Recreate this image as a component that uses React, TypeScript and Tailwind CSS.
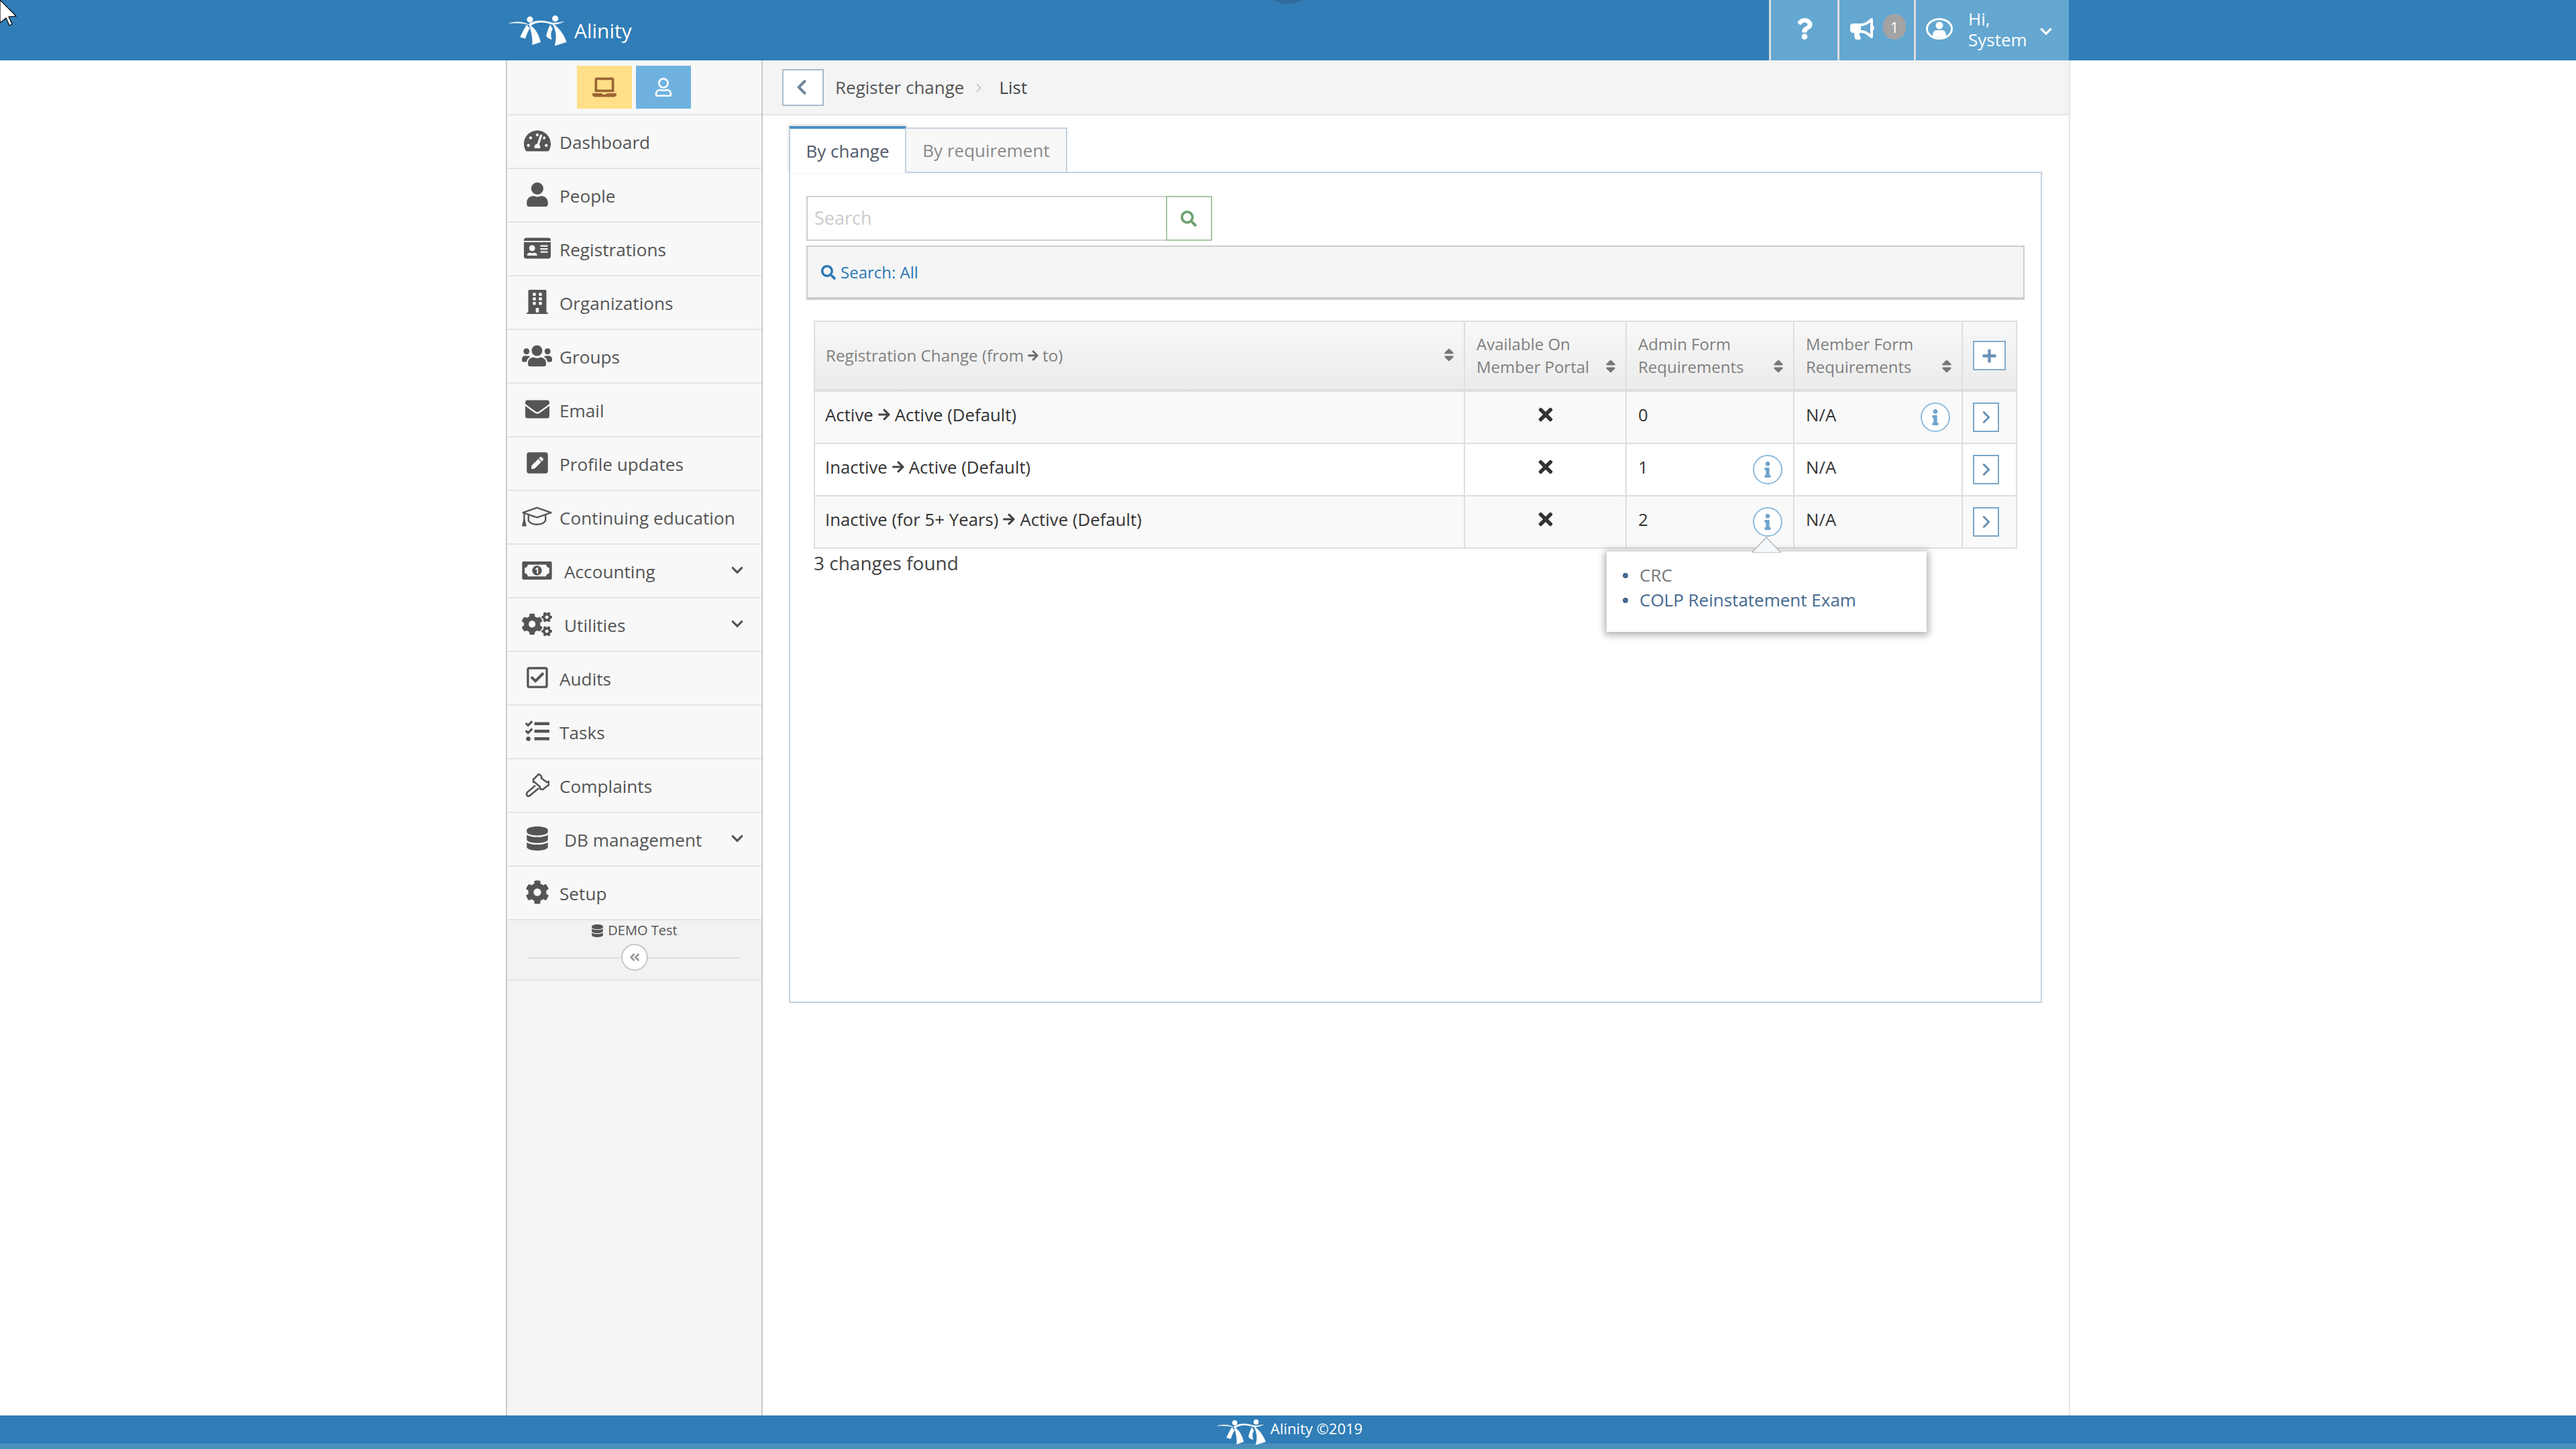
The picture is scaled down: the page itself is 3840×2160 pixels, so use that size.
import React from "react";
import {
  FaTachometerAlt, FaUser, FaIdCard, FaBuilding, FaUsers, FaEnvelope, FaPenSquare, FaCogs,
  FaRegCheckSquare, FaTasks, FaDatabase, FaCog, FaChevronDown, FaChevronLeft, FaBullhorn, FaQuestion,
  FaSearch, FaTimes, FaPlus, FaInfo, FaAngleDoubleLeft, FaLaptop, FaRegUser, FaSort, FaArrowRight,
} from "react-icons/fa";
import { ChevronRight } from "lucide-react";

const font = { fontFamily: '"Open Sans", "Noto Sans", sans-serif' };

function Logo({ className }: { className: string }) {
  return (
    <svg viewBox="0 0 330 180" className={className} fill="#fff" stroke="#fff" strokeWidth="1.5" strokeLinejoin="round">
      <circle cx="105" cy="45" r="13" />
      <circle cx="218" cy="41" r="13" />
      <path d="M12 62 C45 52 78 56 98 68 C112 54 150 42 205 60 C220 62 238 58 256 55 C238 64 220 68 206 68 C165 52 130 56 110 72 C85 62 50 58 12 62Z" />
      <path d="M90 70 L104 84 C94 100 88 116 84 130 L62 124 C70 106 80 86 90 70Z" />
      <path d="M102 68 C130 84 146 118 152 146 L116 158 C118 130 112 100 102 68Z" />
      <path d="M195 70 L206 86 C198 100 196 116 202 134 C188 130 180 124 178 118 C182 102 188 86 195 70Z" />
      <path d="M206 64 C236 82 258 116 268 146 L216 162 C226 130 224 96 206 64Z" />
    </svg>
  );
}

function GradCap({ className }: { className?: string }) {
  return (
    <svg viewBox="0 0 46 30" className={className} fill="none" stroke="currentColor" strokeWidth="2.4">
      <path d="M1.5 9 L23 1.5 L44.5 9 L23 16.5 Z" strokeLinejoin="round" />
      <path d="M10 13 V21 C14 29 32 29 36 21 V13" />
      <path d="M3.5 10 V21" />
      <path d="M1.5 28.5 L3.5 20 L5.5 28.5 Z" fill="currentColor" />
    </svg>
  );
}

function Money({ className }: { className?: string }) {
  return (
    <svg viewBox="0 0 46 28" className={className}>
      <path fillRule="evenodd" fill="currentColor" d="M2 0 H44 Q46 0 46 2 V26 Q46 28 44 28 H2 Q0 28 0 26 V2 Q0 0 2 0Z M9 5 Q8 9 4 10 V18 Q8 19 9 23 H37 Q38 19 42 18 V10 Q38 9 37 5Z" />
      <circle cx="23" cy="14" r="7.5" fill="currentColor" />
      <text x="23" y="18.5" textAnchor="middle" fontSize="12" fontWeight="700" fill="#f8f8f8" fontFamily="Open Sans">1</text>
    </svg>
  );
}

function Gavel({ className }: { className?: string }) {
  return (
    <svg viewBox="0 0 36 36" className={className} fill="none" stroke="currentColor" strokeWidth="2.6" strokeLinejoin="round">
      <path d="M20 2 L24 5 L24 8 L32 14 L35 13 L35 18 L26 25 L22 24 L22 21 L14 14 L12 14 L12 10 Z" />
      <path d="M15 19 L3 29 Q1 32 3 34 Q5 36 8 33 L20 23" />
    </svg>
  );
}

function UserOval({ className }: { className?: string }) {
  return (
    <svg viewBox="0 0 40 32" className={className} fill="none">
      <ellipse cx="20" cy="16" rx="18.5" ry="14.5" stroke="currentColor" strokeWidth="3" />
      <circle cx="20" cy="11" r="5.5" fill="currentColor" />
      <path d="M10 27 Q10 18 16 18 H24 Q30 18 30 27 Q20 31 10 27Z" fill="currentColor" />
    </svg>
  );
}

const items: { label: string; icon: React.ReactNode; sub?: boolean }[] = [
  { label: "Dashboard", icon: <FaTachometerAlt className="text-[40px]" /> },
  { label: "People", icon: <FaUser className="text-[36px]" /> },
  { label: "Registrations", icon: <FaIdCard className="text-[40px]" /> },
  { label: "Organizations", icon: <FaBuilding className="text-[36px]" /> },
  { label: "Groups", icon: <FaUsers className="text-[45px]" /> },
  { label: "Email", icon: <FaEnvelope className="text-[36px]" /> },
  { label: "Profile updates", icon: <FaPenSquare className="text-[36px]" /> },
  { label: "Continuing education", icon: <GradCap className="w-[45px] h-[30px]" /> },
  { label: "Accounting", icon: <Money className="w-[45px] h-[27px]" />, sub: true },
  { label: "Utilities", icon: <FaCogs className="text-[45px]" />, sub: true },
  { label: "Audits", icon: <FaRegCheckSquare className="text-[36px]" /> },
  { label: "Tasks", icon: <FaTasks className="text-[36px]" /> },
  { label: "Complaints", icon: <Gavel className="w-[36px] h-[36px]" /> },
  { label: "DB management", icon: <FaDatabase className="text-[36px]" />, sub: true },
  { label: "Setup", icon: <FaCog className="text-[36px]" /> },
];

function Sidebar() {
  return (
    <aside className="w-[383px] shrink-0 flex flex-col bg-[#f4f4f4] border-x-2 border-[#cacaca]">
      <div className="h-[82px] bg-[#f8f8f8] border-b-2 border-[#e4e4e4] flex justify-center gap-[6px] pt-[8px] pr-[2px]">
        <div className="w-[82px] h-[64px] bg-[#ffdf88] flex items-center justify-center text-[#9c6434]">
          <FaLaptop className="text-[36px]" />
        </div>
        <div className="w-[82px] h-[64px] bg-[#6fb2e0] flex items-center justify-center text-white">
          <FaRegUser className="text-[28px]" />
        </div>
      </div>
      {items.map((it) => (
        <div key={it.label} className="h-[80px] bg-[#f8f8f8] border-b-2 border-[#e4e4e4] flex items-center pl-[22px] pr-[26px] text-[#555]">
          <span className="w-[45px] h-[46px] flex items-center justify-center -mt-[2px] shrink-0">{it.icon}</span>
          <span className={`text-[26.2px] leading-none mt-[2px] ${it.sub ? "ml-[18px]" : "ml-[11px]"}`}>{it.label}</span>
          {it.sub && <FaChevronDown className="ml-auto text-[20px] -mt-[2px] text-[#555]" />}
        </div>
      ))}
      <div className="h-[90px] bg-[#f2f2f2] border-b-2 border-[#e4e4e4] flex flex-col items-center text-[#555]">
        <div className="flex items-center gap-[6px] text-[20px] leading-none mt-[2px] h-[26px]">
          <FaDatabase className="text-[19px]" />
          <span>DEMO Test</span>
        </div>
        <div className="w-[318px] h-[2px] bg-[#e0e0e0] mt-[27px] relative flex items-center justify-center">
          <span className="absolute w-[40px] h-[40px] rounded-full bg-white border-2 border-[#c8c8c8] flex items-center justify-center text-[#999] text-[18px] -mt-[2px]">
            <FaAngleDoubleLeft />
          </span>
        </div>
      </div>
    </aside>
  );
}

function Sort({ className = "" }: { className?: string }) {
  return <FaSort className={`text-[24px] text-[#777] shrink-0 ${className}`} />;
}

function Arrow() {
  return <FaArrowRight className="inline text-[20px] mx-[6px] text-[#444]" />;
}

function Info() {
  return (
    <span className="w-[44px] h-[44px] rounded-full border-2 border-[#8cbbdc] flex items-center justify-center text-[#6fa3cb] bg-white shrink-0">
      <FaInfo className="text-[24px]" />
    </span>
  );
}

function HeadCell({ lines }: { lines: string[] }) {
  return (
    <div className="flex items-end justify-between border-r-2 border-[#dedede] pl-[17px] pr-[10px] pb-[16px] text-[24px] leading-[34px] text-[#808080]">
      <div>{lines.map((l) => <div key={l}>{l}</div>)}</div>
      <Sort className="mb-[6px]" />
    </div>
  );
}

const rows = [
  { from: "Active", to: "Active (Default)", admin: "0", aInfo: false, mInfo: true, bg: "bg-[#f9f9f9]" },
  { from: "Inactive", to: "Active (Default)", admin: "1", aInfo: true, mInfo: false, bg: "bg-white" },
  { from: "Inactive (for 5+ Years)", to: "Active (Default)", admin: "2", aInfo: true, mInfo: false, bg: "bg-[#f9f9f9]" },
];

function Table() {
  return (
    <div className="relative ml-[11px] mt-[31px] w-[1794px]">
      <div className="border-2 border-[#dedede]">
        <div className="grid grid-cols-[969px_241px_250px_251px_79px] h-[104px] bg-gradient-to-b from-[#f8f8f8] to-[#ebebeb] border-b-4 border-[#dedede]">
          <div className="flex items-center justify-between border-r-2 border-[#dedede] pl-[16px] pr-[10px] text-[24.2px] text-[#808080]">
            <span className="inline-flex items-center">Registration Change (from<FaArrowRight className="text-[18px] mx-[5px] text-[#666]" />to)</span>
            <Sort className="-mt-[2px]" />
          </div>
          <HeadCell lines={["Available On", "Member Portal"]} />
          <HeadCell lines={["Admin Form", "Requirements"]} />
          <HeadCell lines={["Member Form", "Requirements"]} />
          <div className="flex items-center pl-[15px]">
            <span className="w-[49px] h-[44px] border-2 border-[#85abcb] bg-white flex items-center justify-center text-[#6a92b8] text-[23px]">
              <FaPlus />
            </span>
          </div>
        </div>
        {rows.map((r, i) => (
          <div key={i} className={`grid grid-cols-[969px_241px_250px_251px_79px] ${i < 2 ? "h-[78px] border-b-2 border-[#dedede]" : "h-[76px]"} ${r.bg} text-[25.8px] text-[#333]`}>
            <div className="flex items-center border-r-2 border-[#dedede] pl-[15px] pb-[8px]">
              {r.from}<Arrow />{r.to}
            </div>
            <div className="flex items-center justify-center border-r-2 border-[#dedede] pb-[8px] text-[30px] text-[#333]">
              <FaTimes />
            </div>
            <div className="flex items-center justify-between border-r-2 border-[#dedede] pl-[17px] pr-[16px]">
              <span className="-mt-[8px]">{r.admin}</span>
              {r.aInfo && <Info />}
            </div>
            <div className="flex items-center justify-between border-r-2 border-[#dedede] pl-[17px] pr-[17px]">
              <span className="-mt-[8px]">N/A</span>
              {r.mInfo && <Info />}
            </div>
            <div className="flex items-center pl-[15px]">
              <span className="w-[39px] h-[44px] border-2 border-[#79a6c9] bg-white flex items-center justify-center text-[#5f8db3]">
                <ChevronRight size={30} strokeWidth={2.2} />
              </span>
            </div>
          </div>
        ))}
      </div>
      <div className="text-[28px] leading-[37px] text-[#444] mt-[3px]">3 changes found</div>
      <div className="absolute left-[1182px] top-[344px] w-[477px] h-[120px] bg-white shadow-[0_2px_10px_3px_rgba(0,0,0,0.3)] pl-[24px] pt-[17px] text-[26px] leading-[37px]">
        <svg viewBox="0 0 44 24" className="absolute left-[216px] -top-[22px] w-[44px] h-[24px]">
          <path d="M0 24 L22 1 L44 24Z" fill="#f4f8fb" stroke="#b5b5b5" strokeWidth="1.5" />
        </svg>
        <div className="flex items-center text-[#777]">
          <span className="w-[8px] h-[8px] rounded-full bg-[#45698f] mr-[17px]" />CRC
        </div>
        <div className="flex items-center text-[#45698f]">
          <span className="w-[8px] h-[8px] rounded-full bg-[#45698f] mr-[17px]" />COLP Reinstatement Exam
        </div>
      </div>
    </div>
  );
}

function Main() {
  return (
    <main className="flex-1 bg-white border-r-2 border-[#e4e4e4]">
      <div className="h-[82px] bg-[#f4f4f4] border-b-2 border-[#e4e4e4] flex items-center pl-[29px] text-[26px] text-[#555]">
        <span className="w-[62px] h-[55px] bg-white border-2 border-[#a9bccb] flex items-center justify-center text-[#72879a] text-[26px] pr-[4px]">
          <FaChevronLeft />
        </span>
        <span className="ml-[17px]">Register change</span>
        <ChevronRight className="ml-[11px] mt-[2px] text-[#b3c0cc]" size={22} strokeWidth={1.6} />
        <span className="ml-[19px] text-[#444]">List</span>
      </div>
      <div className="ml-[39px] w-[1868px] mt-[16px]">
        <div className="flex items-end h-[70px] relative z-10 text-[26px] -mb-[2px]">
          <div className="w-[175px] h-[70px] bg-white border-t-4 border-x-2 border-t-[#4a8fc2] border-x-[#c4d2e0] flex items-center justify-center text-[#50596a] shadow-[0_-2px_5px_rgba(0,0,0,0.15)]">
            By change
          </div>
          <div className="w-[240px] h-[68px] bg-[#f8f8f8] border-2 border-l-0 border-[#c4d2e0] flex items-center justify-center text-[#8a8a8a]">
            By requirement
          </div>
        </div>
        <div className="h-[1239px] border-2 border-[#c4d2e0] pt-[34px] px-[24px]">
          <div className="flex h-[67px]">
            <div className="w-[536px] border-2 border-[#cfcfcf] border-r-0 flex items-center pl-[10px] text-[27px] text-[#cccccc]">Search</div>
            <div className="w-[69px] border-2 border-[#a5c7a3] flex items-center justify-center text-[#6fa272] text-[24px] pr-[2px]">
              <FaSearch />
            </div>
          </div>
          <div className="mt-[7px] w-[1816px] h-[81px] bg-[#f5f5f5] border-2 border-b-4 border-[#cccccc] flex items-center pl-[20px] text-[24px] text-[#2a78b5]">
            <FaSearch className="text-[22px] mr-[7px]" />Search: All
          </div>
          <Table />
        </div>
      </div>
    </main>
  );
}

export default function App() {
  return (
    <div className="relative w-[3840px] h-[2160px] flex flex-col bg-white overflow-hidden" style={font}>
      <header className="h-[90px] shrink-0 bg-[#307db7] text-white">
        <div className="w-[2332px] mx-auto h-full flex items-center">
          <Logo className="w-[110px] h-[60px] ml-[1px] -mt-[2px]" />
          <span className="text-[30px] leading-none mt-[1px] -ml-[9px]">Alinity</span>
          <div className="ml-auto mr-[2px] h-full flex bg-[#64a7d1]">
            <div className="w-[102px] border-l-[3px] border-[#dddddd] flex items-center justify-center text-[32px] pb-[4px]">
              <FaQuestion />
            </div>
            <div className="w-[114px] border-l-[3px] border-[#dddddd] flex items-center pl-[16px] pb-[4px]">
              <FaBullhorn className="text-[36px]" />
              <span className="ml-[13px] w-[34px] h-[38px] rounded-full bg-[#a3a3a3] flex items-center justify-center text-[22px] -mt-[6px]">1</span>
            </div>
            <div className="w-[231px] border-l-[3px] border-[#dddddd] flex items-center pl-[15px]">
              <UserOval className="w-[40px] h-[32px] -mt-[4px]" />
              <div className="ml-[23px] text-[26px] leading-[31px] -mt-[3px]">
                <div>Hi,</div>
                <div>System</div>
              </div>
              <FaChevronDown className="ml-[18px] text-[20px] mt-[4px]" />
            </div>
          </div>
        </div>
      </header>
      <div className="flex-1 w-[2332px] mx-auto flex">
        <Sidebar />
        <Main />
      </div>
      <footer className="h-[50px] shrink-0 bg-[#307db7] border-b-[8px] border-[#4a90bb] flex items-center justify-center text-white text-[22px]">
        <Logo className="w-[93px] h-[51px] -my-[4px] mt-[1px] ml-[2px]" />
        <span className="-ml-[10px] -mt-[3px]">Alinity ©2019</span>
      </footer>
      <div className="absolute left-[1875px] -top-[84px] w-[90px] h-[90px] rounded-full bg-[#2f6a9c]" />
      <svg viewBox="0 0 26 40" className="absolute left-0 top-0 w-[26px] h-[40px]">
        <path d="M0 0 L24 24 L13 25 L18 36 L14 38 L9 27 L0 34Z" fill="#fff" stroke="#000" strokeWidth="1.2" />
      </svg>
    </div>
  );
}
